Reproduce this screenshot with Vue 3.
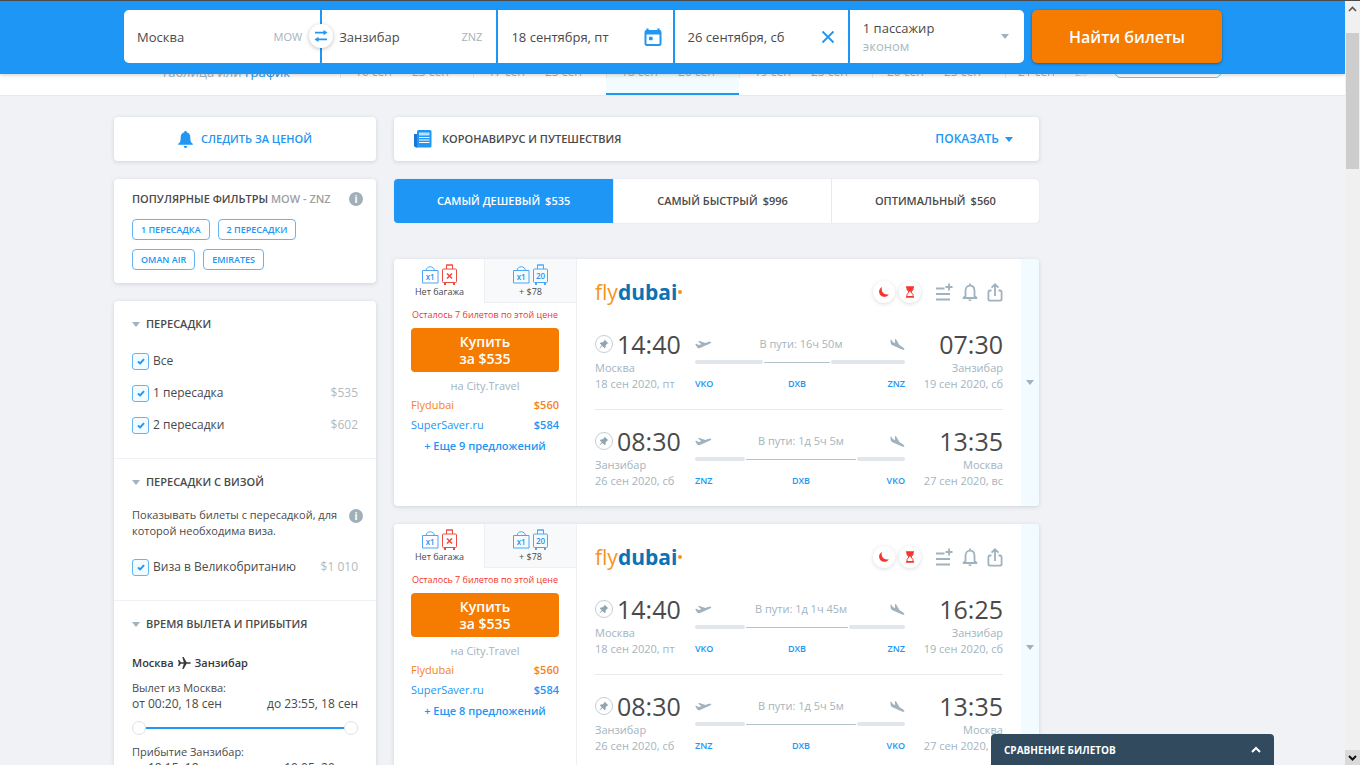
<script setup>
import { ref } from 'vue'

const from = ref('Москва')
const to = ref('Занзибар')
const departDate = ref('18 сентября, пт')
const returnDate = ref('26 сентября, сб')

const dates = [
  { a: '16 сен', b: '23 сен' },
  { a: '17 сен', b: '25 сен' },
  { a: '18 сен', b: '26 сен', active: true },
  { a: '19 сен', b: '25 сен' },
  { a: '20 сен', b: '25 сен' },
  { a: '21 сен', b: '25 сен', last: true }
]
const chips = [['1 ПЕРЕСАДКА', '2 ПЕРЕСАДКИ'], ['OMAN AIR', 'EMIRATES']]
const stops = ref([
  { id: 'all', label: 'Все', price: '', on: true },
  { id: 'one', label: '1 пересадка', price: '$535', on: true },
  { id: 'two', label: '2 пересадки', price: '$602', on: true }
])
const visas = ref([{ id: 'uk', label: 'Виза в Великобританию', price: '$1 010', on: true }])

const sorts = [
  { label: 'САМЫЙ ДЕШЕВЫЙ', price: '$535', active: true },
  { label: 'САМЫЙ БЫСТРЫЙ', price: '$996' },
  { label: 'ОПТИМАЛЬНЫЙ', price: '$560' }
]

const back = {
  dep: '08:30', depCity: 'Занзибар', depDate: '26 сен 2020, сб',
  arr: '13:35', arrCity: 'Москва', arrDate: '27 сен 2020, вс',
  time: '1д 5ч 5м', a: 'ZNZ', b: 'DXB', c: 'VKO', parts: [50, 112, 48]
}
const tickets = [
  {
    more: 9,
    legs: [{
      dep: '14:40', depCity: 'Москва', depDate: '18 сен 2020, пт',
      arr: '07:30', arrCity: 'Занзибар', arrDate: '19 сен 2020, сб',
      time: '16ч 50м', a: 'VKO', b: 'DXB', c: 'ZNZ', parts: [68, 68, 74]
    }, back]
  },
  {
    more: 8,
    legs: [{
      dep: '14:40', depCity: 'Москва', depDate: '18 сен 2020, пт',
      arr: '16:25', arrCity: 'Занзибар', arrDate: '19 сен 2020, сб',
      time: '1д 1ч 45м', a: 'VKO', b: 'DXB', c: 'ZNZ', parts: [50, 104, 56]
    }, back]
  }
]
const cols = (p) => p.map((n) => `minmax(0, ${n}fr)`).join(' ')
</script>

<template>
  <div class="app">
    <div class="page">
      <header class="header">
        <form class="wrap search" @submit.prevent>
          <div class="fields">
            <div class="field">
              <input v-model="from" aria-label="Откуда" />
              <span class="code">MOW</span>
              <button type="button" class="swap" aria-label="Поменять местами">
                <svg width="14" height="14" viewBox="0 0 14 14"><path d="M1 3.6h9.5M4 10.400h9" stroke="#2196f3" stroke-width="1.700" /><path d="M9.500 1l4 2.600-4 2.600zM4.500 7.800l-4 2.600 4 2.600z" fill="#2196f3" /></svg>
              </button>
            </div>
            <div class="field to">
              <input v-model="to" aria-label="Куда" />
              <span class="code">ZNZ</span>
            </div>
            <div class="field">
              <input v-model="departDate" aria-label="Туда" />
              <button type="button" class="plain" aria-label="Календарь">
                <svg width="18" height="20" viewBox="0 0 18 20"><path d="M3.500 1.500v3M14.500 1.500v3" stroke="#2196f3" stroke-width="2.200" /><rect x="1.500" y="4" width="15" height="14" rx="1.500" fill="none" stroke="#2196f3" stroke-width="2" /><path d="M1 3.500h16v4H1z" fill="#2196f3" /><path d="M5 9.800h3.600v3.400H5z" fill="#2196f3" /></svg>
              </button>
            </div>
            <div class="field">
              <input v-model="returnDate" aria-label="Обратно" />
              <button type="button" class="plain" aria-label="Очистить">
                <svg width="18" height="14" viewBox="0 0 18 14"><path d="M3.500 1.500l11 11M14.500 1.500l-11 11" stroke="#2196f3" stroke-width="1.800" /></svg>
              </button>
            </div>
            <button type="button" class="field pax">
              <span class="pax-text"><span>1 пассажир</span><small>эконом</small></span>
              <i class="tri grey"></i>
            </button>
          </div>
          <button class="find">Найти билеты</button>
        </form>
      </header>

      <nav class="dates">
        <div class="wrap dates-row">
          <div class="dates-lead">Таблица или <a href="#">график</a></div>
          <div class="dates-list">
            <a v-for="d in dates" :key="d.a" href="#" class="date" :class="{ active: d.active, last: d.last }">
              <span>{{ d.a }}</span><span>—</span><span>{{ d.b }}</span>
            </a>
          </div>
          <button class="dates-btn" aria-label="Выбрать даты"></button>
        </div>
      </nav>

      <div class="wrap body">
        <aside class="side">
          <button class="card follow">
            <svg width="15" height="17" viewBox="0 0 15 17"><path d="M7.500 0c.8 0 1.200.5 1.200 1.200 2.400.6 3.600 2.600 3.600 5.200 0 3.800.8 5.300 2.500 6.400v.9H.2v-.9c1.700-1.100 2.500-2.600 2.500-6.400 0-2.600 1.200-4.600 3.600-5.200C6.300.5 6.700 0 7.500 0zM5.800 15h3.400c0 1.300-.7 2-1.700 2s-1.700-.7-1.700-2z" fill="#2196f3" /></svg>
            <span>СЛЕДИТЬ ЗА ЦЕНОЙ</span>
          </button>

          <section class="card popular">
            <div class="popular-head">
              <h2>ПОПУЛЯРНЫЕ ФИЛЬТРЫ <span>MOW - ZNZ</span></h2>
              <button class="info" aria-label="Подсказка">i</button>
            </div>
            <div v-for="(row, i) in chips" :key="i" class="chips">
              <button v-for="c in row" :key="c" class="chip">{{ c }}</button>
            </div>
          </section>

          <div class="card filters">
            <section class="group">
              <h3><i class="tri grey"></i>ПЕРЕСАДКИ</h3>
              <label v-for="s in stops" :key="s.id" class="check">
                <span class="box"><input v-model="s.on" type="checkbox" /><svg v-if="s.on" width="8" height="7" viewBox="0 0 8 7"><path d="M1 3.400l2.200 2L7 1.200" fill="none" stroke="#2196f3" stroke-width="2" /></svg></span>
                <span class="check-text">{{ s.label }}</span>
                <span class="price">{{ s.price }}</span>
              </label>
            </section>
            <section class="group">
              <h3><i class="tri grey"></i>ПЕРЕСАДКИ С ВИЗОЙ</h3>
              <div class="note">
                <p>Показывать билеты с пересадкой, для которой необходима виза.</p>
                <button class="info" aria-label="Подсказка">i</button>
              </div>
              <label v-for="s in visas" :key="s.id" class="check">
                <span class="box"><input v-model="s.on" type="checkbox" /><svg v-if="s.on" width="8" height="7" viewBox="0 0 8 7"><path d="M1 3.400l2.200 2L7 1.200" fill="none" stroke="#2196f3" stroke-width="2" /></svg></span>
                <span class="check-text">{{ s.label }}</span>
                <span class="price">{{ s.price }}</span>
              </label>
            </section>
            <section class="group">
              <h3><i class="tri grey"></i>ВРЕМЯ ВЫЛЕТА И ПРИБЫТИЯ</h3>
              <div class="route">
                <span>Москва</span>
                <svg width="13" height="12" viewBox="0 0 13 12"><path d="M0 3h1.200l1.600 2.200h3L4.300 0h1.300l3 5.200h3c.7 0 1.300.3 1.300.8s-.6.800-1.300.8h-3l-3 5.200H4.300l1.500-5.200h-3L1.200 9H0l.8-3z" fill="#37383a" /></svg>
                <span>Занзибар</span>
              </div>
              <div class="range-label">Вылет из Москва:</div>
              <div class="range-values"><span>от 00:20, 18 сен</span><span>до 23:55, 18 сен</span></div>
              <div class="slider">
                <input type="range" min="0" max="100" value="0" aria-label="Вылет не раньше" />
                <input type="range" min="0" max="100" value="100" aria-label="Вылет не позже" />
              </div>
              <div class="range-label">Прибытие Занзибар:</div>
              <div class="range-values"><span>от 18:15, 18 сен</span><span>до 19:05, 20 сен</span></div>
            </section>
          </div>
        </aside>

        <main class="main">
          <section class="card news">
            <svg width="18" height="18" viewBox="0 0 18 18"><path d="M0 4h4v13.500H2.500A2.500 2.500 0 0 1 0 15z" fill="#1976d2" /><path d="M4.500 0H16a1.500 1.500 0 0 1 1.500 1.500V16a1.500 1.500 0 0 1-1.500 1.500H2.200C3 17.200 3 16.500 3 15.500v-14A1.500 1.500 0 0 1 4.500 0z" fill="#2196f3" /><path d="M5 2.500h10.500v3H5z" fill="#bbdefb" /><path d="M5 7.500h10.500M5 10h10.500M5 12.500h10.500" stroke="#fff" stroke-width="1" /></svg>
            <h2>КОРОНАВИРУС И ПУТЕШЕСТВИЯ</h2>
            <button class="show">ПОКАЗАТЬ<i class="tri blue"></i></button>
          </section>

          <div class="sorts">
            <button v-for="s in sorts" :key="s.label" class="sort" :class="{ active: s.active }"><span>{{ s.label }}</span><b>{{ s.price }}</b></button>
          </div>

          <article v-for="(t, i) in tickets" :key="i" class="card ticket">
            <div class="buy-col">
              <div class="bags">
                <button class="bag on">
                  <svg width="36" height="21" viewBox="0 0 36 21">
                    <g fill="none" stroke="#4aa8f5"><path d="M.5 6.500H16v12.500H.5z" /><path d="M4 6.500C4.500 1.500 12 1.500 12.500 6.500" /></g>
                    <g fill="none" stroke="#ef4a42"><rect x="20.500" y="5" width="14" height="13.500" rx="1" /><path d="M24.500 5V1h6v4M24 1h7" /><path d="M25 9.500l5 5M30 9.500l-5 5" stroke-width="1.600" /><path d="M23 19v2M32 19v2" stroke-width="2" /></g>
                    <text x="8.200" y="16" text-anchor="middle" font-size="8" font-weight="600" fill="#2196f3">x1</text>
                  </svg>
                  <span>Нет багажа</span>
                </button>
                <button class="bag">
                  <svg width="36" height="21" viewBox="0 0 36 21">
                    <g fill="none" stroke="#4aa8f5"><path d="M.5 6.500H16v12.500H.5z" /><path d="M4 6.500C4.500 1.500 12 1.500 12.500 6.500" /><rect x="20.500" y="5" width="14" height="13.500" rx="1" /><path d="M24.500 5V1h6v4M24 1h7" /><path d="M23 19v2M32 19v2" stroke-width="2" /></g>
                    <text x="8.200" y="16" text-anchor="middle" font-size="8" font-weight="600" fill="#2196f3">x1</text>
                    <text x="27.500" y="15" text-anchor="middle" font-size="8" font-weight="600" fill="#2196f3">20</text>
                  </svg>
                  <span>+ $78</span>
                </button>
              </div>
              <div class="left-note">Осталось 7 билетов по этой цене</div>
              <button class="buy">Купить<br />за $535</button>
              <div class="agent">на City.Travel</div>
              <a class="offer orange" href="#"><span>Flydubai</span><b>$560</b></a>
              <a class="offer" href="#"><span>SuperSaver.ru</span><b>$584</b></a>
              <a class="more" href="#">+ Еще {{ t.more }} предложений</a>
            </div>

            <div class="info-col">
              <div class="top">
                <div class="logo"><span>fly</span><b>dubai</b><i></i></div>
                <div class="tools">
                  <span class="badge"><svg width="12" height="12" viewBox="0 0 12 12"><path d="M4 1C.6 2.600.2 7 2.800 9.400c2.500 2.200 6.400 1.700 8.200-1.200C8 9 5.200 7.800 4.200 5.400 3.500 3.800 3.500 2.300 4 1z" fill="#f4352c" /></svg></span>
                  <span class="badge"><svg width="10" height="12" viewBox="0 0 10 12"><path d="M1 1h8M1 11h8" stroke="#f4352c" stroke-width="1.600" /><path d="M2 1.500h6v2L6 6l2 2.500v2H2v-2L4 6 2 3.500z" fill="#fff" stroke="#f4352c" /><path d="M2 2h6v1.500L5 6.200 2 3.500z" fill="#f4352c" /></svg></span>
                  <button class="plain list" aria-label="Добавить к сравнению"><svg width="18" height="19" viewBox="0 0 18 19"><path d="M1 5.500h8.500M1 11h14M1 16.500h14M14 .5v7M10.500 4h7" stroke="#9fb2bd" stroke-width="1.800" /></svg></button>
                  <button class="plain" aria-label="Следить за ценой"><svg width="16" height="19" viewBox="0 0 16 19"><path d="M8 .5v2M3.500 13V8c0-3.200 1.800-5.300 4.500-5.300S12.500 4.800 12.500 8v5l2 2h-13z" fill="none" stroke="#9fb2bd" stroke-width="1.800" stroke-linejoin="round" /><path d="M6.300 16.500h3.400c-.3 1-.9 1.500-1.700 1.500s-1.400-.5-1.700-1.500z" fill="#9fb2bd" /></svg></button>
                  <button class="plain" aria-label="Поделиться"><svg width="16" height="19" viewBox="0 0 16 19"><path d="M4.500 7.500H3A1.600 1.600 0 0 0 1.400 9v7A1.600 1.600 0 0 0 3 17.600h10a1.600 1.600 0 0 0 1.600-1.600V9A1.600 1.600 0 0 0 13 7.500h-1.500M8 13V1.500M4.500 4.600L8 1.300l3.500 3.300" fill="none" stroke="#9fb2bd" stroke-width="1.800" /></svg></button>
                </div>
              </div>

              <div v-for="(l, j) in t.legs" :key="j" class="leg">
                <div class="end">
                  <div class="time">
                    <button class="pin" aria-label="Закрепить рейс"><svg width="10" height="10" viewBox="0 0 10 10"><path d="M5.500.4l4 4-1.200.2-1.600 1.700-.1 2-1 .9-2-2.200L.6 9.600.3 9.300l2.500-3L.8 4.400l1-1 2-.1L5.300 1.700z" fill="#8fa5b2" /></svg></button>
                    <span>{{ l.dep }}</span>
                  </div>
                  <div class="place">{{ l.depCity }}</div>
                  <div class="place">{{ l.depDate }}</div>
                </div>
                <div class="path">
                  <div class="path-top">
                    <svg width="17" height="12" viewBox="0 0 17 12"><path d="M.2 6l1.300-.3 2 1.200 3-.6L3 3.400l1.600-.5 5.700 2 3.500-1.100c1-.3 2.200-.2 2.400.3.200.7-.8 1.300-1.700 1.700L4.400 10.200c-.9.300-1.700.1-2.100-.6z" fill="#9fb2bd" /></svg>
                    <span>В пути: {{ l.time }}</span>
                    <svg width="15" height="13" viewBox="0 0 15 13"><path d="M.4 1.600l1.200.3 1.200 2.200 2.300 1.200L4.800 1l1.400.5 3.200 5.600 3.700 2.400c.9.600 1.500 1.500 1.200 2-.3.500-1.300.4-2.200-.1L2.500 7.200C1.300 6.600.8 5.900.7 4.900z" fill="#9fb2bd" /></svg>
                  </div>
                  <div class="track" :style="{ gridTemplateColumns: cols(l.parts) }"><i></i><i class="thin"></i><i></i></div>
                  <div class="codes" :style="{ gridTemplateColumns: cols(l.parts) }"><span>{{ l.a }}</span><span>{{ l.b }}</span><span>{{ l.c }}</span></div>
                </div>
                <div class="end right">
                  <div class="time"><span>{{ l.arr }}</span></div>
                  <div class="place">{{ l.arrCity }}</div>
                  <div class="place">{{ l.arrDate }}</div>
                </div>
              </div>
            </div>
            <button class="expand" aria-label="Подробнее"><i class="tri grey"></i></button>
          </article>
        </main>
      </div>

      <button class="compare">
        <span>СРАВНЕНИЕ БИЛЕТОВ</span>
        <svg width="10" height="7" viewBox="0 0 10 7"><path d="M1 6l4-4 4 4" fill="none" stroke="#fff" stroke-width="2" /></svg>
      </button>
    </div>

    <div class="scroll">
      <svg width="9" height="6" viewBox="0 0 9 6"><path d="M1 5l3.500-3.500L8 5" fill="none" stroke="#555" stroke-width="1.600" /></svg>
      <div class="thumb"></div>
      <div class="down"><svg width="9" height="6" viewBox="0 0 9 6"><path d="M1 1l3.500 3.500L8 1" fill="none" stroke="#111" stroke-width="2" /></svg></div>
    </div>
  </div>
</template>

<style>
body { margin: 0; background: #f0f2f6; }
</style>

<style scoped>
* { box-sizing: border-box; }
.app {
  display: flex;
  height: 100vh;
  overflow: hidden;
  border-top: 1px solid #4a4a4a;
  background: #f0f2f6;
  color: #4a4a4a;
  font: 12px/16px "Open Sans", "Noto Sans", sans-serif;
}
button, input { font: inherit; color: inherit; border: 0; padding: 0; margin: 0; background: none; }
button { cursor: pointer; }
a { text-decoration: none; color: #2196f3; }
h2, h3, p { margin: 0; font-size: 12px; font-weight: 600; }
svg { display: block; flex: none; }
.page { position: relative; flex: 1; min-width: 0; overflow: hidden; }
.wrap { max-width: 1117px; margin: 0 auto; }
.card { background: #fff; border-radius: 4px; box-shadow: 0 1px 4px rgba(60, 70, 90, .18); }
.tri { display: inline-block; flex: none; border: 4px solid transparent; border-top: 5px solid #9fb2bd; border-bottom: 0; }
.tri.blue { border-top-color: #2196f3; }
.plain { display: flex; }

.header { position: relative; z-index: 2; background: #1e96f5; padding: 9px 0 11px; box-shadow: 0 1px 4px rgba(0, 0, 0, .2); }
.search { display: flex; gap: 8px; padding: 0 9px 0 10px; }
.fields { flex: 1; display: grid; grid-template-columns: 196fr 174fr 174fr 173fr 174fr; gap: 2px; border-radius: 5px; }
.field { position: relative; display: flex; align-items: center; min-width: 0; height: 53px; padding: 0 11px 0 13px; background: #fff; text-align: left; }
.field:first-child { border-radius: 5px 0 0 5px; padding-right: 18px; }
.field:last-child { border-radius: 0 5px 5px 0; padding-right: 15px; }
.field.to { padding-left: 17px; padding-right: 14px; }
.field input { flex: 1; width: 0; min-width: 0; font-size: 13px; outline: 0; }
.code { color: #a3b4be; font-size: 11px; }
.swap { position: absolute; z-index: 1; right: -13px; top: 14px; width: 24px; height: 24px; border-radius: 50%; background: #fff; box-shadow: 0 1px 4px rgba(0, 0, 0, .25); display: flex; align-items: center; justify-content: center; }
.pax { justify-content: space-between; }
.pax-text { display: flex; flex-direction: column; font-size: 13px; line-height: 18px; }
.pax-text small { font-size: 13px; color: #a9bac4; }
.find { width: 190px; border-radius: 5px; background: #f57c00; color: #fff; font-size: 16px; font-weight: 600; box-shadow: 0 1px 3px rgba(0, 0, 0, .35); }

.dates { display: flex; align-items: flex-end; height: 22px; background: #fff; border-bottom: 1px solid #e6e9ed; color: #a3b4be; }
.dates-row { flex: 1; display: flex; height: 44px; padding: 0 10px; }
.dates-lead { width: 216px; padding: 13px 0 0 37px; font-size: 13px; }
.dates-list { flex: 1; display: flex; overflow: hidden; }
.date { flex: 0 0 133px; display: flex; gap: 4px; padding: 13px 0 0 15px; color: #a3b4be; border-bottom: 2px solid transparent; background: linear-gradient(#e6ecf0, #e6ecf0) left top / 1px 27px no-repeat; }
.date.active { background-color: #f2fcff; border-bottom-color: #2196f3; }
.date.last { flex-basis: 112px; padding-left: 13px; mask-image: linear-gradient(90deg, #000 55%, transparent 80%); }
.dates-btn { width: 106px; height: 27px; border: 1px solid #62c9e0; border-radius: 5px; }

.body { display: grid; grid-template-columns: 262px minmax(0, 645px); column-gap: 18px; align-items: start; padding-top: 21px; }
.side, .main { display: flex; flex-direction: column; }
.side { gap: 18px; }
.follow { height: 44px; display: flex; align-items: center; justify-content: center; gap: 8px; color: #2196f3; font-size: 11px; font-weight: 600; }
.popular { padding: 12px 18px 4px; }
.popular-head { display: flex; justify-content: space-between; align-items: center; height: 16px; margin-bottom: 12px; margin-right: -5px; }
.popular h2 { font-size: 11px; }
.popular h2 span { color: #9a9fa3; }
.info { width: 14px; height: 14px; border-radius: 50%; background: #a0b0ba; color: #fff; font-size: 10px; line-height: 14px; font-weight: 700; flex: none; }
.chips { display: flex; gap: 8px; margin-bottom: 9px; }
.chip { height: 21px; padding: 0 8px; border: 1px solid #64b5f6; border-radius: 4px; color: #2196f3; font-size: 9px; font-weight: 600; }
.group { padding: 14px 18px 17px; border-bottom: 1px solid #f0f2f5; }
.group h3 { display: flex; align-items: center; gap: 6px; height: 18px; margin-bottom: 12px; font-size: 11px; }
.check { display: flex; align-items: center; height: 32px; gap: 4px; }
.box { position: relative; display: flex; width: 17px; height: 17px; align-items: center; justify-content: center; }
.box input { appearance: none; position: absolute; inset: 0; border: 1px solid #64b5f6; border-radius: 3px; background: #f2fcff; }
.box svg { position: relative; pointer-events: none; }
.check-text { flex: 1; }
.price { color: #b3b9bd; }
.note { display: flex; justify-content: space-between; margin: 16px -5px 12px 0; gap: 8px; }
.note p { font-size: 11px; font-weight: 400; }
.note .info { margin-top: 2px; }
.route { display: flex; align-items: center; gap: 4px; height: 18px; margin: 21px 0 8px; font-size: 11px; font-weight: 600; color: #37383a; }
.range-label { font-size: 11px; }
.range-values { display: flex; justify-content: space-between; font-size: 12px; }
.slider { position: relative; height: 16px; margin: 8px 0; background: linear-gradient(#2196f3, #2196f3) center / 100% 2px no-repeat; }
.slider input { position: absolute; left: 0; top: 0; width: 100%; height: 16px; appearance: none; pointer-events: none; }
.slider input::-webkit-slider-thumb { appearance: none; pointer-events: auto; width: 14px; height: 14px; border-radius: 50%; background: #fff; border: 1px solid #dde2e6; }

.news { height: 44px; display: flex; align-items: center; padding: 0 26px 0 20px; gap: 10px; }
.news h2 { flex: 1; font-size: 11px; }
.show { display: flex; align-items: center; gap: 6px; color: #2196f3; font-weight: 600; font-size: 12px; }
.sorts { display: grid; grid-template-columns: 219fr 217fr 208fr; margin: 18px 0 36px; height: 44px; border-radius: 4px; overflow: hidden; background: #fff; box-shadow: 0 0 1px rgba(60, 70, 90, .3); }
.sort { display: flex; align-items: center; justify-content: center; gap: 5px; font-size: 11px; font-weight: 600; border-left: 1px solid #e6e9ed; }
.sort b { font-weight: 600; }
.sort.active { background: #1e96f5; color: #fff; border: 0; }

.ticket { display: flex; margin-bottom: 18px; overflow: hidden; }
.buy-col { width: 183px; flex: none; border-right: 1px solid #eef0f3; padding: 0 17px 10px; text-align: center; display: flex; flex-direction: column; }
.bags { display: grid; grid-template-columns: 90px 1fr; margin: 0 -17px 4px; }
.bag { display: flex; flex-direction: column; align-items: center; height: 44px; padding-top: 5px; gap: 0; font-size: 9px; line-height: 13px; background: #f7f9fa; border: solid #edf0f2; border-width: 0 0 1px 1px; }
.bag.on { background: #fff; border-color: transparent; }
.left-note { color: #f4352c; font-size: 9px; margin: 0 -10px; white-space: nowrap; }
.buy { height: 44px; margin: 5px 0 4px; border-radius: 4px; background: #f57c00; color: #fff; font-size: 14px; line-height: 17px; font-weight: 600; }
.agent { color: #a3b4be; font-size: 11px; line-height: 19px; }
.offer { display: flex; justify-content: space-between; font-size: 11px; line-height: 20px; }
.offer b, .more { font-weight: 600; }
.offer.orange { color: #f58220; }
.more { font-size: 11px; line-height: 22px; }

.info-col { flex: 1; min-width: 0; padding: 18px 18px 0; }
.top { display: flex; justify-content: space-between; align-items: center; height: 30px; margin-bottom: 23px; }
.logo { display: flex; font-size: 21px; line-height: 24px; color: #0b72b5; }
.logo span { color: #f7941d; }
.logo i { width: 4px; height: 4px; margin: 10px 0 0 1px; border-radius: 50%; background: #f7941d; }
.tools { display: flex; align-items: center; gap: 9px; }
.badge { width: 22px; height: 22px; margin-right: -5px; border-radius: 50%; background: #fff; box-shadow: 0 1px 4px rgba(0, 0, 0, .14); display: flex; align-items: center; justify-content: center; }
.list { margin-left: 10px; }
.leg { display: grid; grid-template-columns: 100px minmax(0, 1fr) 98px; padding-bottom: 17px; }
.leg + .leg { border-top: 1px solid #e6e9ed; padding-top: 17px; }
.time { display: flex; align-items: center; gap: 4px; height: 28px; margin-bottom: 2px; font-size: 25px; line-height: 26px; }
.pin { width: 18px; height: 18px; border: 1px solid #c3ced5; border-radius: 50%; display: flex; align-items: center; justify-content: center; }
.place { font-size: 11px; color: #a3b4be; white-space: nowrap; }
.end.right { text-align: right; }
.end.right .time { justify-content: flex-end; }
.path-top { display: flex; align-items: center; justify-content: space-between; height: 28px; color: #a3b4be; font-size: 11px; }
.track { display: grid; align-items: center; height: 8px; }
.track i { height: 4px; border-radius: 2px; background: #e0e6eb; }
.track .thin { height: 1px; background: #b3c3cc; margin: 0 1px; }
.codes { display: grid; margin-top: 10px; font-size: 9px; font-weight: 600; color: #2196f3; text-align: center; }
.codes span:first-child { text-align: left; }
.codes span:last-child { text-align: right; }
.expand { width: 18px; flex: none; background: #f2fbff; display: flex; align-items: center; justify-content: center; }

.compare { position: absolute; z-index: 3; right: 71px; bottom: 0; width: 283px; height: 31px; padding: 0 13px; display: flex; align-items: center; justify-content: space-between; background: #314a5e; color: #fff; border-radius: 4px 4px 0 0; font-size: 10px; font-weight: 700; }

.scroll { width: 15px; flex: none; display: flex; flex-direction: column; align-items: center; padding-top: 5px; background: #f0f0f0; }
.thumb { width: 13px; height: 136px; margin-top: 21px; background: #cdcdcd; }
.down { margin-top: auto; width: 100%; height: 15px; background: #dadada; display: flex; align-items: center; justify-content: center; }
</style>
